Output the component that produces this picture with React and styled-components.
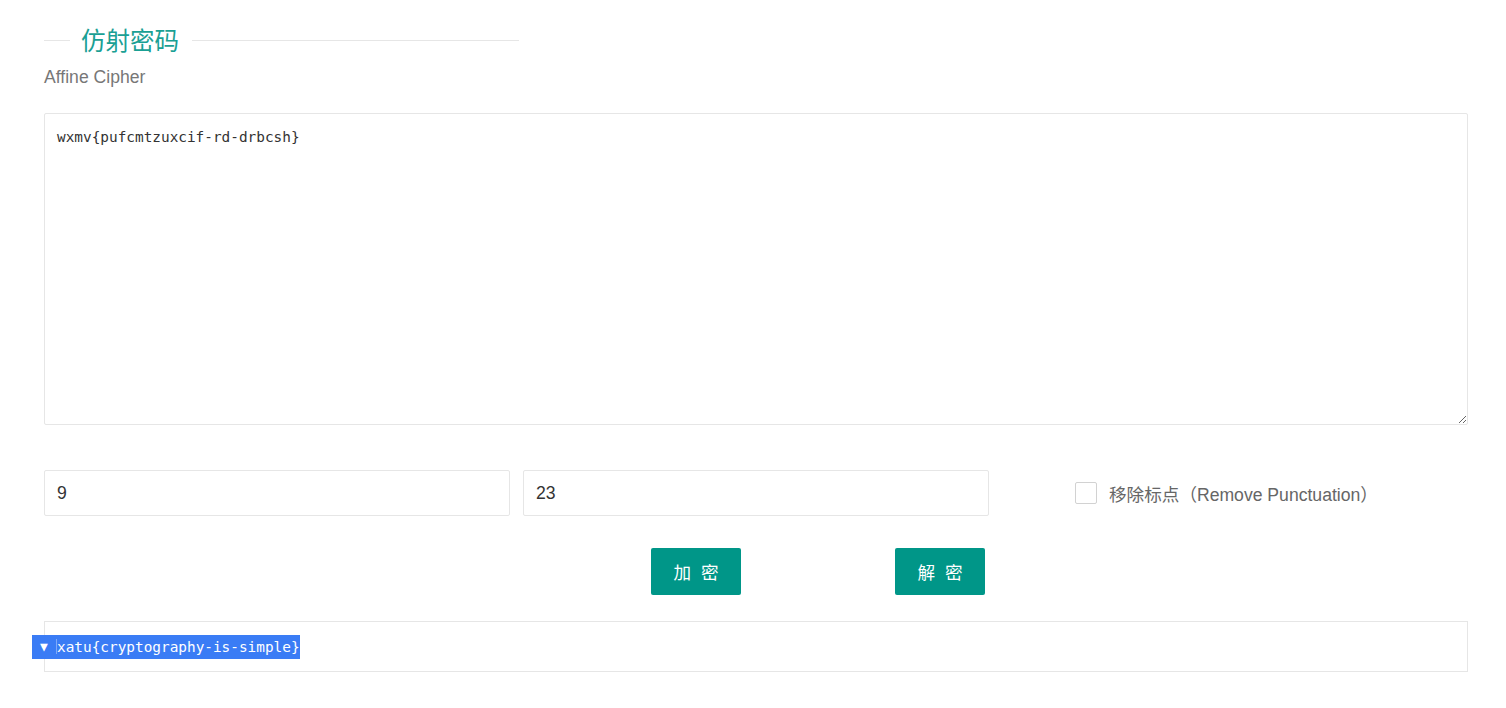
import React, { useState } from 'react'
import styled, { createGlobalStyle } from 'styled-components'

const GlobalStyle = createGlobalStyle`
    body {
        margin: 0;
        background: #fff;
        font-family: "Liberation Sans", "Noto Sans CJK SC", sans-serif;
        color: #333;
    }
`

const App = () => {
    const [cipher, setCipher] = useState('wxmv{pufcmtzuxcif-rd-drbcsh}')
    const [a, setA] = useState('9')
    const [b, setB] = useState('23')

    return (
        <Page>
            <GlobalStyle />
            <TitleField>
                <Legend>仿射密码</Legend>
            </TitleField>
            <Subtitle>Affine Cipher</Subtitle>

            <Source value={cipher} onChange={(e) => setCipher(e.target.value)} spellCheck={false} />

            <KeyRow>
                <KeyInput value={a} onChange={(e) => setA(e.target.value)} />
                <KeyInput value={b} onChange={(e) => setB(e.target.value)} />
                <Option>
                    <Check />
                    <OptionText>移除标点（Remove Punctuation）</OptionText>
                </Option>
            </KeyRow>

            <Actions>
                <Button>加 密</Button>
                <Button>解 密</Button>
            </Actions>

            <Result>
                <Selected>
                    <Marker>▼</Marker>
                    <span>xatu{'{'}cryptography-is-simple{'}'}</span>
                </Selected>
            </Result>
        </Page>
    )
}

export default App

const Page = styled.div`
    padding: 21px 38px 40px 44px;
`

const TitleField = styled.fieldset`
    width: 475px;
    margin: 0;
    padding: 0;
    border: none;
    border-top: 1px solid #e6e6e6;
    box-sizing: border-box;
`

const Legend = styled.legend`
    margin-left: 26px;
    padding: 0 13px 0 11px;
    font-size: 24.5px;
    color: #1aa094;
    font-family: "Noto Sans CJK SC", sans-serif;
    line-height: 38px;
`

const Subtitle = styled.div`
    margin-top: 6px;
    font-size: 17.6px;
    color: #777;
    line-height: 24px;
`

const Source = styled.textarea`
    display: block;
    width: 100%;
    height: 312px;
    margin-top: 24px;
    box-sizing: border-box;
    padding: 13px 12px;
    border: 1px solid #e6e6e6;
    border-radius: 2px;
    font-family: "DejaVu Sans Mono", monospace;
    font-size: 14.4px;
    line-height: 20px;
    color: #333;
    outline: none;
    resize: vertical;
`

const KeyRow = styled.div`
    display: grid;
    grid-template-columns: repeat(3, 1fr);
    column-gap: 13px;
    margin-top: 45px;
    align-items: center;
`

const KeyInput = styled.input`
    height: 46px;
    box-sizing: border-box;
    padding: 0 12px;
    border: 1px solid #e6e6e6;
    border-radius: 2px;
    font-family: "Liberation Sans", sans-serif;
    font-size: 17.6px;
    color: #333;
    outline: none;
`

const Option = styled.label`
    display: flex;
    align-items: center;
    padding-left: 73px;
    gap: 12px;
`

const Check = styled.span`
    width: 22px;
    height: 22px;
    box-sizing: border-box;
    border: 1px solid #d2d2d2;
    border-radius: 2px;
    background: #fff;
`

const OptionText = styled.span`
    font-size: 17.6px;
    color: #666;
`

const Actions = styled.div`
    display: flex;
    gap: 154px;
    padding-left: 607px;
    margin-top: 32px;
`

const Button = styled.button`
    width: 90px;
    height: 47px;
    border: none;
    border-radius: 2px;
    background: #009688;
    color: #fff;
    font-family: "Noto Sans CJK SC", sans-serif;
    font-size: 17.6px;
    letter-spacing: 3px;
    text-indent: 3px;
    cursor: pointer;
`

const Result = styled.div`
    display: flex;
    align-items: center;
    height: 51px;
    margin-top: 26px;
    box-sizing: border-box;
    padding-left: 12px;
    border: 1px solid #e6e6e6;
    font-family: "DejaVu Sans Mono", monospace;
    font-size: 14.4px;
`

const Selected = styled.span`
    display: inline-flex;
    align-items: center;
    height: 24px;
    margin-left: -25px;
    background: #3a7cf5;
    color: #fff;
`

const Marker = styled.span`
    width: 24px;
    text-align: center;
    font-size: 13px;
    border-right: 1px solid #7fa9f8;
`
